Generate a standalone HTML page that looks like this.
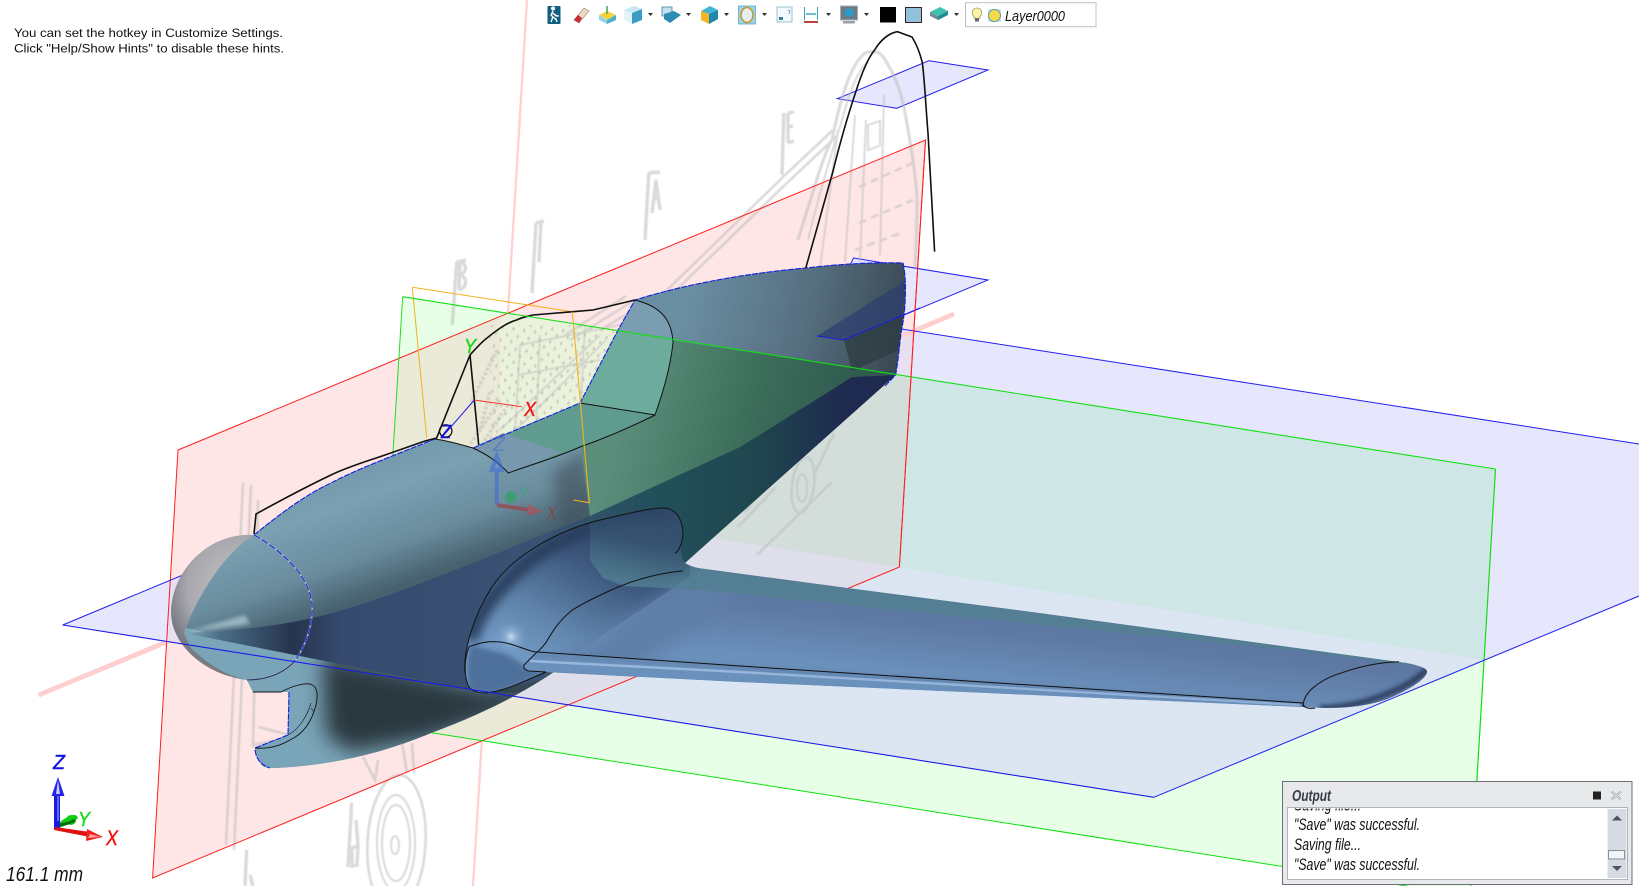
<!DOCTYPE html>
<html><head><meta charset="utf-8"><title>CAD viewport</title>
<style>
html,body{margin:0;padding:0;background:#fff;width:1639px;height:886px;overflow:hidden}
svg{display:block;position:absolute;left:0;top:0}
text{font-family:"Liberation Sans",sans-serif}
.it{font-style:italic}
</style></head><body>
<svg width="1639" height="886" viewBox="0 0 1639 886" xmlns="http://www.w3.org/2000/svg">
<defs>
<filter id="b05" x="-5%" y="-5%" width="110%" height="110%"><feGaussianBlur stdDeviation=".6"/></filter>
<filter id="b2" x="-30%" y="-30%" width="160%" height="160%"><feGaussianBlur stdDeviation="2"/></filter>
<filter id="b5" x="-30%" y="-30%" width="160%" height="160%"><feGaussianBlur stdDeviation="5"/></filter>
<filter id="b7" x="-40%" y="-40%" width="180%" height="180%"><feGaussianBlur stdDeviation="7"/></filter>
<filter id="b10" x="-40%" y="-40%" width="180%" height="180%"><feGaussianBlur stdDeviation="10"/></filter>
<clipPath id="cR"><polygon points="178,450 925.5,140 899.4,567 152.6,878"/></clipPath>
<clipPath id="cG"><polygon points="402.7,296.7 1495.5,469 1470,896 376,724"/></clipPath>
<clipPath id="cGb"><polygon points="402.7,296.7 1495.5,469 1483.5,660 385,486"/></clipPath>
<clipPath id="cB"><polygon points="62.7,625 812,315 1639,444 1639,596 1153.8,797.3"/></clipPath>
<clipPath id="cBody"><path d="M184,633 C197,597 224,553 254,535 C280,514 305,495 331,483 C355,470 395,455 434.7,439 C450,441 462,445 473,448 L580,403 L618,330 L635,300 C690,283 750,273 806,268 C840,264 875,262 903,263 C907,280 906,310 901,333 C899,350 898,362 895.6,375 L685,563 C640,610 600,645 557,670 C520,695 480,715 431,733 C390,750 340,765 274,768 C266,768 262,767 260,762 C256,756 255,752 255,748 L288,735 L289,692 L253,692 L247,680 C225,676 205,662 190,647 Z"/></clipPath>
<clipPath id="cWing"><path d="M465,673 C463,650 474,615 492,587 C515,553 560,530 600,520 C630,513 650,508 664,508 C678,509 683,522 683,535 C682,545 678,552 685,563 C690,566 695,568 705,569 L847,588 L1039,613 L1399,662 C1415,664 1428,668 1427,672 C1426,680 1405,692 1385,700 C1360,708 1335,709 1303,707 L740,682 L546,672 C530,678 510,690 486,693 C475,693 470,690 468,685 C466,680 465,677 465,673 Z"/></clipPath>
<clipPath id="cOut"><rect x="1288" y="808.5" width="319" height="70"/></clipPath>
<linearGradient id="gBody" gradientUnits="userSpaceOnUse" x1="400" y1="430" x2="450" y2="567">
<stop offset="0" stop-color="#6f96a9"/><stop offset=".35" stop-color="#7aa0b2"/><stop offset=".72" stop-color="#6a8d9e"/><stop offset="1" stop-color="#47616f"/></linearGradient>
<linearGradient id="gTail" gradientUnits="userSpaceOnUse" x1="690" y1="290" x2="900" y2="340">
<stop offset="0" stop-color="#6a8ea2"/><stop offset=".55" stop-color="#566f80"/><stop offset="1" stop-color="#3a4953"/></linearGradient>
<linearGradient id="gNavy" gradientUnits="userSpaceOnUse" x1="184" y1="600" x2="900" y2="600">
<stop offset="0" stop-color="#7ea4b4"/><stop offset=".05" stop-color="#4c6e8a"/><stop offset=".15" stop-color="#26344c"/><stop offset=".22" stop-color="#354a6e"/><stop offset=".5" stop-color="#3a5274"/><stop offset=".66" stop-color="#22505a"/><stop offset=".8" stop-color="#1f464e"/><stop offset=".92" stop-color="#1e2a50"/><stop offset="1" stop-color="#1e2a50"/></linearGradient>
<linearGradient id="gGrn" gradientUnits="userSpaceOnUse" x1="640" y1="340" x2="860" y2="400">
<stop offset="0" stop-color="#5b8f7c"/><stop offset=".6" stop-color="#3a6a58"/><stop offset="1" stop-color="#2f5a4e"/></linearGradient>
<linearGradient id="gWing" gradientUnits="userSpaceOnUse" x1="1000" y1="600" x2="990" y2="695">
<stop offset="0" stop-color="#5a76a0"/><stop offset=".35" stop-color="#5e7aa4"/><stop offset=".85" stop-color="#6a90bb"/><stop offset="1" stop-color="#6b91bc"/></linearGradient>
<linearGradient id="gFair" gradientUnits="userSpaceOnUse" x1="590" y1="520" x2="520" y2="650">
<stop offset="0" stop-color="#2f4568"/><stop offset=".3" stop-color="#3f5a80"/><stop offset=".75" stop-color="#6287ae"/><stop offset="1" stop-color="#6f97c2"/></linearGradient>
<linearGradient id="gTint" gradientUnits="userSpaceOnUse" x1="645" y1="508" x2="635" y2="585">
<stop offset="0" stop-color="#527f92" stop-opacity=".08"/><stop offset=".45" stop-color="#4a7c8a" stop-opacity=".25"/><stop offset="1" stop-color="#527f92" stop-opacity=".85"/></linearGradient>
<radialGradient id="gDome" gradientUnits="userSpaceOnUse" cx="240" cy="590" r="75">
<stop offset="0" stop-color="#c4c4c8"/><stop offset=".7" stop-color="#a8a8ae"/><stop offset="1" stop-color="#7a7a83"/></radialGradient>
<radialGradient id="gHi"><stop offset="0" stop-color="#cfe2f4" stop-opacity=".95"/><stop offset=".4" stop-color="#a0c0e0" stop-opacity=".5"/><stop offset="1" stop-color="#7fa5d0" stop-opacity="0"/></radialGradient>
<pattern id="dia" width="11" height="13" patternUnits="userSpaceOnUse" patternTransform="rotate(9)">
<path d="M3,2 l1.6,2.5 -1.6,2.5 -1.6,-2.5z M8.5,8 l1.6,2.5 -1.6,2.5 -1.6,-2.5z" fill="#cdd2bf"/></pattern>
</defs>

<!-- background axes -->
<line x1="527" y1="0" x2="473" y2="886" stroke="#ffd2d2" stroke-width="2.4"/>
<line x1="38.7" y1="695" x2="954" y2="314" stroke="#ffcfcf" stroke-width="4.5"/>

<!-- planes -->
<polygon points="178,450 925.5,140 899.4,567 152.6,878" fill="#ffe6e6"/>
<polygon points="402.7,296.7 1495.5,469 1470,896 376,724" fill="#e6ffe6"/>
<g clip-path="url(#cG)"><polygon points="178,450 925.5,140 899.4,567 152.6,878" fill="#ebe9d8"/></g>
<g clip-path="url(#cG)"><g clip-path="url(#cR)"><rect x="500" y="295" width="130" height="160" fill="#ebf2dc"/></g></g>
<line x1="38.7" y1="695" x2="160" y2="645" stroke="#ffcfcf" stroke-width="4.5"/>
<polygon points="62.7,625 812,315 1639,444 1639,596 1153.8,797.3" fill="#e6e6fd"/>
<g clip-path="url(#cB)">
 <polygon points="402.7,296.7 1495.5,469 1470,896 376,724" fill="#dce6f3"/>
 <polygon points="402.7,296.7 1495.5,469 1483.5,660 385,486" fill="#cfe6e6"/>
 <polygon points="178,450 925.5,140 899.4,567 152.6,878" fill="#e8dff0"/>
 <g clip-path="url(#cG)"><polygon points="178,450 925.5,140 899.4,567 152.6,878" fill="#dedfea"/></g>
 <g clip-path="url(#cGb)"><polygon points="178,450 925.5,140 899.4,567 152.6,878" fill="#d3dedb"/></g>
</g>
<line x1="900" y1="337" x2="954" y2="314" stroke="#ffcfcf" stroke-width="4.5"/>
<polygon points="929,60.7 988,70 896.7,108.3 837.4,98.7" fill="#e6e6fd" stroke="#2020f0" stroke-width="1"/>
<polygon points="853.5,258 988,280 844,340 817,336" fill="#e6e6fd" stroke="#2020f0" stroke-width="1"/>

<!-- blueprint drawing -->
<rect x="490" y="325" width="135" height="115" fill="url(#dia)" clip-path="url(#cG)"/>
<g fill="none" stroke="#bcbcbc" stroke-width="2" opacity=".55" filter="url(#b05)">
 <path d="M798,240 C812,195 825,150 832,140 C840,100 850,65 865,53 C875,50 880,52 884,58 C895,75 902,95 905,113 C912,150 916,180 917,200 C917,230 916,250 915,267" stroke-width="3"/>
 <path d="M808,240 C820,190 834,145 842,120 C850,90 858,70 868,62"/>
 <path d="M820,268 L838,130 M845,262 L855,115 M860,262 L866,120 M880,255 L884,95"/>
 <path d="M664,293 L783,177 L833,130 M670,296 L788,182 L838,135" stroke-width="2.6"/>
 <path d="M859,187 L913,163 M859,223 L913,200 M855,250 L901,233" stroke-dasharray="8 5" stroke-width="2.4"/>
 <rect x="868" y="125" width="12" height="25" transform="skewY(-20) translate(0,316)"/>
 <path d="M600,335 L500,430 M606,340 L510,436 M520,345 L515,435 M540,335 L536,430 M585,325 L580,420 M520,345 L620,325 M518,375 L600,360" stroke-width="1.8"/>
 <path d="M500,400 L470,445 M508,405 L478,450 M490,392 L480,430 M497,350 L470,405" stroke-width="3.5" stroke-dasharray="3 2"/>
 <path d="M635,300 L570,340 M626,296 L565,335 M668,290 L600,330" stroke-width="2.4"/>
 <path d="M783.8,113 L782,175 M788,113 L788,143 M788,113 L794,112 M788,127 L793,126 M788,143 L794,141" stroke-width="3.4"/>
 <path d="M648.8,173 L645,240 M648.8,173 L660,172 M652,213 L656,180 L660,210 M653,200 L659,198" stroke-width="3.4"/>
 <path d="M536,223 L532,293 M536,223 L544,221 M541,222 L539,262" stroke-width="3.4"/>
 <path d="M456.7,261.7 L452.3,325 M456.7,262 L466,260 M460,262 L459,290 M461,262 C468,265 466,273 460,275 C468,277 467,288 459,290" stroke-width="3.4"/>
 <path d="M351.7,803 L348,867 M352,848 L358,846 L357,865 L352,866 Z M356,820 L358,846" stroke-width="3.4"/>
 <path d="M246.7,850 L245,886 M250,875 L253,886" stroke-width="3.4"/>
 <ellipse cx="396.5" cy="843" rx="29" ry="68" transform="rotate(3 396 843)" stroke-width="2.6"/>
 <ellipse cx="396" cy="843" rx="19" ry="48"/><ellipse cx="396" cy="843" rx="14" ry="38"/>
 <ellipse cx="395" cy="845" rx="4" ry="9"/>
 <path d="M243,483 L226,845 M251,485 L234,850 M258,500 L253,747 M258,727 L290,735 M253,745 L288,738" stroke-width="2.6"/>
 <path d="M363,757 L375,780 L378,760 M402,743 L407,773 M412,743 L414,773" stroke-width="2.6"/>
 <ellipse cx="803" cy="485" rx="11" ry="28" transform="rotate(8 803 485)" stroke-width="2.6"/>
 <ellipse cx="802" cy="488" rx="5" ry="14"/>
 <path d="M834,433 L815,473 M832,482 L757,555 M776,487 L738,527 M770,480 L745,512" stroke-width="2.6"/>
</g>

<!-- plane outlines behind the model -->
<polygon points="178,450 925.5,140 899.4,567 152.6,878" fill="none" stroke="#ff1e1e" stroke-width="1"/>
<line x1="402.7" y1="296.7" x2="376" y2="724" stroke="#20e020" stroke-width="1"/>
<line x1="376" y1="724" x2="1470" y2="896" stroke="#10e010" stroke-width="1"/>
<line x1="1495.5" y1="469" x2="1470" y2="896" stroke="#10e010" stroke-width="1.2"/>
<line x1="812" y1="315" x2="1639" y2="444" stroke="#2020f0" stroke-width="1"/>
<line x1="1153.8" y1="797.3" x2="1639" y2="596" stroke="#2020f0" stroke-width="1"/>
<line x1="62.7" y1="625" x2="190" y2="572" stroke="#2020f0" stroke-width="1"/>
<path d="M412.3,287.3 L572.3,311.7 M412.3,287.3 L426.7,438" fill="none" stroke="#f5b021" stroke-width="1"/>

<!-- spinner dome -->
<path d="M254,535 C205,532 171,575 171,612 C171,645 205,675 247,680 L320,620 Z" fill="url(#gDome)"/>

<!-- fuselage -->
<g clip-path="url(#cBody)">
 <rect x="150" y="240" width="780" height="560" fill="url(#gBody)"/>
 <polygon points="620,240 930,240 930,400 640,400" fill="url(#gTail)" filter="url(#b5)"/>
 <polygon points="552,472 586,450 594,520 562,534" fill="#434f5a" opacity=".6" filter="url(#b7)"/>
 <!-- lower uncovered part -->
 <polygon points="150,620 486,693 620,690 420,800 220,800" fill="#7aa5b8"/>
 <polygon points="322,655 490,690 565,668 512,712 430,738 350,752 326,735" fill="#2b393f" filter="url(#b10)"/>
 <polygon points="420,725 510,697 565,672 500,700" fill="#3e5c74" filter="url(#b5)"/>
 <!-- navy band -->
 <path d="M184,633 C230,630 270,628 312,618 C350,610 408,590 522,543 L590,516 L740,447 L852,377 L896,375 L685,563 L540,680 L486,693 Z" fill="url(#gNavy)"/>
 <path d="M184,633 L245,615 L250,624 Z" fill="#b6d3dc" opacity=".7" filter="url(#b2)"/>
 <!-- green tint -->
 <polygon points="578,326 894,374 852,377 740,447 590,516 580,440" fill="url(#gGrn)"/>
 <!-- mini plane tint -->
 <polygon points="817,336 844,340 902,316 906,280" fill="#2c3f70" opacity=".72"/>
 <polygon points="844,340 902,316 899,350 852,371" fill="#2c3a3e" opacity=".7"/>
</g>

<!-- canopy -->
<path d="M473,448 L580,403 L618,330 L635,300 C655,305 672,315 673,343 C670,370 662,395 655,415 C625,430 600,440 580,447 C555,458 530,465 508.3,473 C498,462 487,455 473,448 Z" fill="#6dab9d"/>
<path d="M635,300 C655,305 672,315 673,340 L618,331 Z" fill="#7a9db2"/>
<path d="M580,403 L655,415 C625,430 600,440 580,447 C555,458 530,465 508,473 C498,462 487,455 473,448 Z" fill="#5f9c8f"/>
<path d="M473,448 L503,433 L561,452 C540,462 525,466 508.3,473 C498,462 487,455 473,448 Z" fill="#7899ad"/>

<!-- wing -->
<g clip-path="url(#cWing)">
 <rect x="460" y="500" width="980" height="220" fill="url(#gWing)"/>
 <polygon points="460,500 700,500 700,570 548,672 460,700" fill="url(#gFair)"/>
 <polygon points="548,672 700,570 735,600 620,680" fill="#5f7fa8" filter="url(#b10)"/>
 <path d="M470,640 C480,600 530,545 600,525 C630,517 650,512 664,512" fill="none" stroke="#2c3f60" stroke-width="16" filter="url(#b5)"/>
 <path d="M470,690 C466,670 467,655 472,645 C488,652 510,650 525,668 L546,672 C530,678 510,690 486,693 Z" fill="#4a6a94" opacity=".85" filter="url(#b2)"/>
 <polygon points="590,510 590,560 603,578 624,586 700,590 690,505" fill="url(#gTint)"/>
 <polygon points="700,590 1300,651 1410,666 1420,640 847,586 690,560 690,585" fill="#527f92" opacity=".85"/>
 <circle cx="511" cy="636.7" r="16" fill="url(#gHi)"/>
 <polygon points="524,666 536,653 740,666 1300,703 1303,708 740,683 546,673 527,671" fill="#6a90bc"/>
 <path d="M530,661 L740,672 L1300,705" fill="none" stroke="#98b7dc" stroke-width="2.4"/>
 <path d="M536,655 L740,667 L1303,704" fill="none" stroke="#44597c" stroke-width="1.4" opacity=".5" filter="url(#b2)"/>
 <path d="M1320,708 C1365,708 1415,685 1428,668" fill="none" stroke="#2e4060" stroke-width="6" filter="url(#b2)"/>
</g>

<!-- model outlines: sketches and edges -->
<g fill="none" stroke="#1020e0" stroke-width="1.1" stroke-dasharray="6 1.2">
 <path d="M254,535 C280,514 305,495 331,483 C355,470 395,455 434.7,439"/>
 <path d="M473,448 L580,403 L618,330 L635,300 C690,283 750,273 806,268 C840,264 875,262 903,263 C907,280 906,310 901,333 C899,350 898,362 895.6,375 L885,386"/>
 <path d="M289,692 L288,735 L255,748 M255,750 C256,756 258,764 270,768"/>
</g>
<g fill="none" stroke="#111" stroke-width="1">
 <path d="M434.7,439 C450,441 462,445 473,448 C488,455 498,462 508.3,473 C530,465 555,458 580,447 C600,440 625,430 655,415 C662,395 670,370 673,343 C672,315 655,305 635,300"/>
 <path d="M580,403 L655,415"/>
 <path d="M465,673 C463,650 474,615 492,587 C515,553 560,530 600,520 C630,513 650,508 664,508 C678,509 683,522 683,535 C682,545 678,552 675,553"/>
 <path d="M683,570.7 C660,573 640,578 618,587 C600,595 585,602 572.4,610 C560,620 555,628 549.5,636.7 C545,645 540,650 536,653 L524,665 C523,668 525,670 529,671 L546,672 C530,678 510,690 486,693 C475,693 470,690 468,685 C464,675 464,660 469,646.7 C480,643 488,641 496,641.7 C510,642 522,649 534,651.7 L740,666 L1303,703"/>
 <path d="M1303,707 C1303,697 1310,690 1314.5,686.7 C1325,678 1335,675 1345,671.7 C1365,665 1385,662 1399,661.7"/>
 <path d="M1303,704 C1304,708 1308,709 1315,708"/>
 <path d="M253,692 L281,692 C292,686 304,683 310,684 C318,686 318,695 316,705 C312,720 305,733 290,740 C280,746 268,749 255,748" stroke-width=".9"/>
 <path d="M288,735 C298,730 307,717 311,703 M314,712 L311,708" stroke-width=".6"/>
</g>
<path d="M254,535 C290,555 315,585 312,613 C311,635 300,655 293,663 C280,676 262,680 247,680" fill="none" stroke="#b8b8cc" stroke-width="1.6"/>
<path d="M254,535 C290,555 315,585 312,613 C311,635 300,655 293,663" fill="none" stroke="#1020e0" stroke-width="1" stroke-dasharray="7 2"/>
<path d="M293,663 C280,676 262,680 247,680" fill="none" stroke="#1b2a50" stroke-width="1"/>

<g fill="none" stroke="#101010" stroke-width="1.6">
 <path d="M254,534 L256,514 C285,498 310,485 331,475 C350,466 368,461 385,455 L425,441 L436.6,438 L470,355 C478,346 483,341 487,338 C497,330 506,323 516.7,320 C522,317 530,316 533,315 L573,311.7 L593,310 L635,300"/>
 <path d="M470,355 L478.7,445"/>
 <path d="M805.7,268.3 L832.5,173 C840,143 848,115 855.4,93 C862,72 868,58 874.6,50 C882,38 890,33 897.5,31.7 L912,37 C917,45 920,53 922.4,63 C925,85 926,110 928,133 L934.6,251.7"/>
 <circle cx="445.7" cy="431" r="6.2" stroke-width="1.3"/>
</g>

<!-- front plane lines -->
<line x1="402.7" y1="296.7" x2="1495.5" y2="469" stroke="#10e010" stroke-width="1.1"/>
<line x1="62.7" y1="625" x2="1153.8" y2="797.3" stroke="#1a1ae8" stroke-width="1.1"/>
<path d="M572.3,311.7 L589.3,502.7 L573.3,500" fill="none" stroke="#f5b021" stroke-width="1.1"/>
<path d="M817,336 L844,340 L920,308" fill="none" stroke="#1a1ae8" stroke-width="1"/>
<path d="M925.5,140 L899.4,567" fill="none" stroke="#ff1e1e" stroke-width="1"/>

<!-- sketch gizmo -->
<line x1="474.3" y1="400" x2="521.7" y2="406.7" stroke="#ff3030" stroke-width="1"/>
<line x1="474.3" y1="400" x2="443" y2="436" stroke="#2020f0" stroke-width="1"/>
<text x="524" y="416" class="it" font-size="20" fill="#f01818" stroke="#f01818" stroke-width=".4" textLength="12" lengthAdjust="spacingAndGlyphs">X</text>
<text x="464" y="353" class="it" font-size="20" fill="#18d818" stroke="#18d818" stroke-width=".4" textLength="12" lengthAdjust="spacingAndGlyphs">Y</text>
<text x="441" y="438" class="it" font-size="18" fill="#1010d0" stroke="#1010d0" stroke-width=".4" textLength="10" lengthAdjust="spacingAndGlyphs">Z</text>

<!-- translucent triad -->
<g opacity=".55">
 <path d="M496.7,505 L496.7,468 M496.7,456 l-5,14 h10z" stroke="#3a6ad8" stroke-width="4" fill="#6c94e0"/>
 <circle cx="511" cy="497" r="6" fill="#22a850"/>
 <path d="M497,505 L530,510" stroke="#b03030" stroke-width="4"/>
 <path d="M528,504 L543,511.7 L527,516z" fill="#c04848"/>
 <text x="493" y="451" class="it" font-size="20" fill="#4468d8" textLength="12" lengthAdjust="spacingAndGlyphs">Z</text>
 <text x="518" y="500" class="it" font-size="18" fill="#28b060" textLength="10" lengthAdjust="spacingAndGlyphs">Y</text>
 <text x="546" y="520" class="it" font-size="20" fill="#a03030" textLength="11" lengthAdjust="spacingAndGlyphs">X</text>
</g>

<!-- bottom-left triad -->
<path d="M55,829 C66,826 74,822 78,818 C76,812 68,816 60,822Z" fill="#10c810"/>
<circle cx="71" cy="820" r="5" fill="#10d010"/>
<path d="M59,825 C66,824 70,823 75,820" stroke="#0a6a10" stroke-width="3" fill="none"/>
<rect x="54" y="790" width="6" height="39" fill="#1818e0"/>
<rect x="57" y="791" width="2" height="30" fill="#5a6aff"/>
<path d="M58,777 L51.5,796 L64.5,796 Z" fill="#2424e8"/>
<path d="M58,780 L56,794 L60,794Z" fill="#c0ccff"/>
<path d="M55,827 L90,832 L90,837 L54,830 Z" fill="#e01010"/>
<path d="M87,829 L103,837 L86,841 Z" fill="#f02020"/>
<path d="M90,834 L101,837 L88,838Z" fill="#ff9a9a"/>
<text x="53" y="769" class="it" font-size="20" fill="#1010e0" stroke="#1010e0" stroke-width=".4" textLength="12" lengthAdjust="spacingAndGlyphs">Z</text>
<text x="78" y="826" class="it" font-size="20" fill="#12e012" stroke="#12e012" stroke-width=".4" textLength="12" lengthAdjust="spacingAndGlyphs">Y</text>
<text x="106" y="845" class="it" font-size="21" fill="#f01010" stroke="#f01010" stroke-width=".4" textLength="12" lengthAdjust="spacingAndGlyphs">X</text>
<text x="6" y="881" class="it" font-size="20" fill="#111" textLength="77" lengthAdjust="spacingAndGlyphs">161.1 mm</text>

<!-- hints -->
<text x="14" y="37" font-size="12.4" fill="#111" textLength="269" lengthAdjust="spacingAndGlyphs">You can set the hotkey in Customize Settings.</text>
<text x="14" y="52.5" font-size="12.4" fill="#111" textLength="270" lengthAdjust="spacingAndGlyphs">Click "Help/Show Hints" to disable these hints.</text>

<!-- toolbar -->
<g>
 <rect x="547.5" y="6" width="13" height="18" rx="1" fill="#0f5f80"/>
 <path d="M553,10 a1.5,1.5 0 1 1 .1,0 M553,11 l-2,4 2,2 -2,5 M553,13 l3,3 3,0 M553,17 l3,2 1,3" stroke="#fff" stroke-width="1.3" fill="#fff"/>
 <path d="M574,20 L584,8 L589,11 L579,23 Z" fill="#f0d8c0" stroke="#888" stroke-width=".6"/>
 <path d="M574,20 L578,15 L582,18 L579,23 Z" fill="#c83030"/>
 <path d="M599,15 L607,11 L616,15 L607,20Z" fill="#f5d240"/><path d="M599,15 L607,20 V24 L599,20Z" fill="#8fd4e8"/><path d="M616,15 L607,20 V24 L616,20Z" fill="#4ab0d0"/>
 <path d="M607,6 V14" stroke="#40a040" stroke-width="1.4"/>
 <path d="M624,10 L634,6 L642,9 L632,13Z" fill="#c8e8f4"/><path d="M624,10 L632,13 V24 L624,20Z" fill="#e4f2f8"/><path d="M642,9 L632,13 V24 L642,20Z" fill="#3d9cc4"/>
 <path d="M648,13 h5 l-2.5,3z M686,13 h5 l-2.5,3z M724,13 h5 l-2.5,3z M762,13 h5 l-2.5,3z M826,13 h5 l-2.5,3z M864,13 h5 l-2.5,3z M954,13 h5 l-2.5,3z M1085,12 h5 l-2.5,3z" fill="#333"/>
 <path d="M662,7 L672,7 L672,16 L662,16Z" fill="#c4e2f0" stroke="#3a7c9c" stroke-width=".8"/>
 <path d="M664,14 L674,11 L681,15 L670,23 L664,19Z" fill="#2e8cb4"/>
 <path d="M701,11 L710,6 L718,10 L709,14Z" fill="#45b4d4"/><path d="M701,11 L709,14 V24 L701,20Z" fill="#f4b428"/><path d="M718,10 L709,14 V24 L718,19Z" fill="#1f86ac"/>
 <rect x="738.5" y="6" width="17" height="18" fill="#9fd4e8" stroke="#5aa8c8" stroke-width=".8"/>
 <ellipse cx="747" cy="15" rx="6" ry="7.5" fill="#e4edf0" stroke="#c89a30" stroke-width="1.6"/>
 <rect x="777" y="7" width="15" height="15" fill="#f2f8fb" stroke="#9cc0d0" stroke-width="1"/>
 <rect x="779" y="17" width="4" height="3" fill="#3a7c9c"/><path d="M788,10 l2,1 -1,3" stroke="#60a8c8" fill="none"/>
 <path d="M804.5,7 V20 M817.5,7 V20" stroke="#38a0b8" stroke-width="1"/><path d="M806,14 H816" stroke="#38a0b8" stroke-width="1.4"/>
 <rect x="804" y="21" width="14" height="2" fill="#c04040"/>
 <rect x="840.5" y="6" width="17" height="14" fill="#6c7a86" stroke="#a8b0b8" stroke-width="1"/>
 <path d="M845,10 L849,8 L853,10 V15 L849,17 L845,15Z" fill="#2a9ccc"/><rect x="843" y="21" width="12" height="2.5" fill="#9aa0a8"/>
 <rect x="880" y="7" width="16" height="15.5" fill="#000"/>
 <rect x="905.5" y="7.5" width="16" height="15" fill="#92c2da" stroke="#3a2222" stroke-width="1"/>
 <path d="M930,12 L940,7 L948,11 L938,16Z" fill="#3fc0b0"/><path d="M930,12 L938,16 V20 L930,16Z" fill="#708c90"/><path d="M948,11 L938,16 V20 L948,15Z" fill="#1e8c8c"/>
 <rect x="965.5" y="2.7" width="130.5" height="24" fill="#fff" stroke="#bcc0c4" stroke-width="1"/>
 <path d="M977,8 a4.7,4.7 0 0 1 3,8.3 v2 h-6 v-2 a4.7,4.7 0 0 1 3,-8.3z" fill="#fbf4a8" stroke="#9a9a60" stroke-width=".8"/><rect x="975" y="18.5" width="4" height="3" fill="#666"/>
 <rect x="988" y="9" width="13" height="13" fill="#7fc0d8" opacity=".4"/><circle cx="994.5" cy="15.5" r="6" fill="#f4da4a" stroke="#5a98a8" stroke-width="1"/>
 <text x="1005" y="21" class="it" font-size="15" fill="#111" textLength="60" lengthAdjust="spacingAndGlyphs">Layer0000</text>
</g>

<!-- output panel -->
<g>
 <rect x="1282.5" y="781.5" width="349.5" height="103" fill="#e8e9eb" stroke="#6a7076" stroke-width="1"/>
 <text x="1292" y="801" class="it" font-size="16" font-weight="bold" fill="#3a3b48" textLength="39" lengthAdjust="spacingAndGlyphs">Output</text>
 <rect x="1593" y="791.5" width="8" height="8" fill="#222"/>
 <path d="M1611.5,791.5 L1621,799.5 M1621,791.5 L1611.5,799.5" stroke="#a0a4a8" stroke-width="2.2"/>
 <path d="M1611.5,791.5 L1621,799.5 M1621,791.5 L1611.5,799.5" stroke="#f4f4f4" stroke-width=".8"/>
 <rect x="1287.5" y="807.5" width="340" height="72" fill="#fff" stroke="#b0b4b8" stroke-width="1"/>
 <g clip-path="url(#cOut)" class="it" font-size="16.5" fill="#111">
  <text x="1294" y="810.5" class="it" textLength="67" lengthAdjust="spacingAndGlyphs">Saving file...</text>
  <text x="1294" y="830" class="it" textLength="126" lengthAdjust="spacingAndGlyphs">"Save" was successful.</text>
  <text x="1294" y="850" class="it" textLength="67" lengthAdjust="spacingAndGlyphs">Saving file...</text>
  <text x="1294" y="870" class="it" textLength="126" lengthAdjust="spacingAndGlyphs">"Save" was successful.</text>
 </g>
 <rect x="1607.5" y="809" width="19" height="69" fill="#d6dbe3"/>
 <path d="M1612,820.5 h10 l-5,-5z" fill="#50555c"/>
 <path d="M1612,866 h10 l-5,5z" fill="#50555c"/>
 <rect x="1608.5" y="850.5" width="16" height="8.5" fill="#f2f5f8" stroke="#8a8f98" stroke-width="1"/>
</g>
</svg>
</body></html>
